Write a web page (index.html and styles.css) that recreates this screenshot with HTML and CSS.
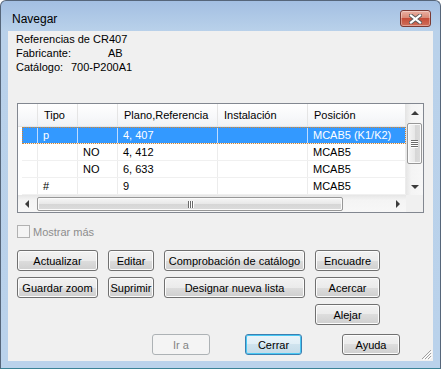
FILE: index.html
```html
<!DOCTYPE html>
<html lang="es">
<head>
    <meta charset="UTF-8">
    <title>Navegar</title>
    <link rel="stylesheet" href="styles.css">
</head>
<body>

    <div class="window">
        <!-- Title bar -->
        <div class="titlebar">
            <span class="title">Navegar</span>
            <div class="close">
                <svg width="13" height="10" viewBox="0 0 13 10">
                    <path d="M2 1.5 L11 8.5 M11 1.5 L2 8.5" stroke="#5b5b5b" stroke-width="4" stroke-linecap="square"/>
                    <path d="M2 1.5 L11 8.5 M11 1.5 L2 8.5" stroke="#ffffff" stroke-width="2.2" stroke-linecap="square"/>
                </svg>
            </div>
        </div>

        <div class="client">
            <div class="info">
                <div>Referencias de CR407</div>
                <div><span class="lbl-fab">Fabricante:</span>AB</div>
                <div><span class="lbl-cat">Catálogo:</span>700-P200A1</div>
            </div>

            <!-- List -->
            <div class="grid">
                <div class="grid-body">
                    <div class="cells">
                        <div class="head">
                            <div></div>
                            <div>Tipo</div>
                            <div></div>
                            <div>Plano,Referencia</div>
                            <div>Instalación</div>
                            <div>Posición</div>
                        </div>
                        <div class="row selected">
                            <div></div><div>p</div><div></div><div>4, 407</div><div></div><div>MCAB5 (K1/K2)</div>
                        </div>
                        <div class="row">
                            <div></div><div></div><div>NO</div><div>4, 412</div><div></div><div>MCAB5</div>
                        </div>
                        <div class="row">
                            <div></div><div></div><div>NO</div><div>6, 633</div><div></div><div>MCAB5</div>
                        </div>
                        <div class="row">
                            <div></div><div>#</div><div></div><div>9</div><div></div><div>MCAB5</div>
                        </div>
                    </div>
                    <div class="vscroll">
                        <div class="sbtn"><span class="arr-up"></span></div>
                        <div class="vthumb">
                            <span class="grip"></span><span class="grip"></span><span class="grip"></span><span class="grip"></span>
                        </div>
                        <div class="track"></div>
                        <div class="sbtn"><span class="arr-down"></span></div>
                    </div>
                </div>
                <div class="hscroll">
                    <div class="sbtn"><span class="arr-left"></span></div>
                    <div class="hthumb">
                        <span class="hgrip"></span><span class="hgrip"></span><span class="hgrip"></span>
                    </div>
                    <div class="track"></div>
                    <div class="sbtn"><span class="arr-right"></span></div>
                    <div class="corner"></div>
                </div>
            </div>

            <label class="check">
                <span class="box"></span>
                <span>Mostrar más</span>
            </label>

            <!-- Buttons -->
            <div class="buttons">
                <button>Actualizar</button>
                <button>Editar</button>
                <button>Comprobación de catálogo</button>
                <button>Encuadre</button>
                <button>Guardar zoom</button>
                <button>Suprimir</button>
                <button>Designar nueva lista</button>
                <button>Acercar</button>
                <button class="alejar">Alejar</button>
            </div>

            <div class="bottom">
                <button class="btn-ira" disabled>Ir a</button>
                <button class="btn-cerrar default">Cerrar</button>
                <button class="btn-ayuda">Ayuda</button>
            </div>

            <svg class="sizegrip" width="11" height="11" viewBox="0 0 11 11">
                <path d="M10 1 L1 10 M10 4 L4 10 M10 7 L7 10" stroke="#a0a0a0" stroke-width="1"/>
                <path d="M11 2 L2 11 M11 5 L5 11 M11 8 L8 11" stroke="#ffffff" stroke-width="1"/>
            </svg>
        </div>
    </div>

</body>
</html>
```

FILE: styles.css
```css
* {
    margin: 0;
    padding: 0;
    box-sizing: border-box;
}

body {
    width: 441px;
    height: 369px;
    font-family: "Liberation Sans", Arial, sans-serif;
    font-size: 11px;
    color: #000;
    background: #fff;
}

.window {
    width: 441px;
    height: 369px;
    border: 1px solid #56667a;
    border-bottom-color: #3b8396;
    border-radius: 6px 6px 0 0;
    background: linear-gradient(#a3bfe2, #b9d1ea 30px, #bad2eb);
    padding: 0 7px 7px 7px;
    display: flex;
    flex-direction: column;
}

/* Title bar */
.titlebar {
    height: 30px;
    display: flex;
    justify-content: space-between;
    align-items: flex-start;
    padding: 0 2px 0 4px;
}

.title {
    font-size: 12px;
    margin-top: 11px;
    line-height: 14px;
}

.close {
    margin-top: 9px;
    width: 31px;
    height: 17px;
    border: 1px solid #7b3a33;
    border-radius: 3px;
    background: linear-gradient(#eab0a2, #d98a77 45%, #c54d38 50%, #d0705b);
    display: flex;
    align-items: center;
    justify-content: center;
    box-shadow: inset 0 0 0 1px rgba(255, 255, 255, 0.35);
}

/* Client area */
.client {
    position: relative;
    width: 425px;
    height: 330px;
    background: #f0f0f0;
    padding: 1px 0 0 8px;
}

.info {
    line-height: 14px;
}

.lbl-fab {
    display: inline-block;
    width: 92px;
}

.lbl-cat {
    display: inline-block;
    width: 55px;
}

/* List */
.grid {
    margin: 29px 0 0 1px;
    width: 407px;
    height: 110px;
    border: 1px solid #828790;
    background: #fff;
}

.grid-body {
    display: flex;
    height: 91px;
}

.cells {
    flex: 1;
    overflow: hidden;
}

.head {
    display: grid;
    grid-template-columns: 20px 40px 40px 100px 90px 1fr;
    height: 23px;
    background: linear-gradient(#ffffff, #f7f8fa 60%, #f1f2f4);
    border-bottom: 1px solid #e5e5e5;
}

.head div {
    border-right: 1px solid #e5e5e5;
    padding-left: 6px;
    line-height: 22px;
    white-space: nowrap;
}

.head div:first-child {
    padding-left: 0;
}

.row {
    display: grid;
    grid-template-columns: 16px 40px 40px 100px 90px 1fr;
    height: 17px;
    margin-left: 4px;
    border-bottom: 1px solid #f0f0f0;
}

.row div {
    border-right: 1px solid #ececec;
    padding-left: 5px;
    line-height: 16px;
    white-space: nowrap;
}

.row.selected {
    background: #3399ff;
    color: #fff;
    outline: 1px dotted #d6842c;
    outline-offset: -1px;
}

.row.selected div {
    border-right-color: #bfdcff;
}

/* Scrollbars */
.vscroll {
    width: 17px;
    display: flex;
    flex-direction: column;
    background: linear-gradient(to right, #e6e6e6, #f4f4f4 30%, #f7f7f7);
}

.sbtn {
    width: 17px;
    height: 17px;
    display: flex;
    align-items: center;
    justify-content: center;
}

.track {
    flex: 1;
}

.arr-up, .arr-down, .arr-left, .arr-right {
    width: 0;
    height: 0;
    border: 4px solid transparent;
}

.arr-up {
    border-bottom: 4px solid #3c3c3c;
    border-top-width: 0;
}

.arr-down {
    border-top: 4px solid #3c3c3c;
    border-bottom-width: 0;
}

.arr-left {
    border-right: 4px solid #3c3c3c;
    border-left-width: 0;
}

.arr-right {
    border-left: 4px solid #3c3c3c;
    border-right-width: 0;
}

.vthumb {
    margin: 2px 1px 0 1px;
    height: 41px;
    border: 1px solid #979797;
    border-radius: 2px;
    background: linear-gradient(to right, #f6f6f6, #e8e8e8 50%, #d6d6d6 51%, #dcdcdc);
    box-shadow: inset 0 0 0 1px #fbfbfb;
    display: flex;
    flex-direction: column;
    align-items: center;
    justify-content: center;
    gap: 1px;
}

.grip {
    width: 7px;
    height: 1px;
    background: #6a6a6a;
    box-shadow: 0 1px 0 #fff;
}

.hscroll {
    height: 17px;
    display: flex;
    background: linear-gradient(#e6e6e6, #f4f4f4 30%, #f7f7f7);
}

.hthumb {
    margin: 2px 0 1px 2px;
    width: 306px;
    border: 1px solid #979797;
    border-radius: 2px;
    background: linear-gradient(#f6f6f6, #e8e8e8 50%, #d6d6d6 51%, #dcdcdc);
    box-shadow: inset 0 0 0 1px #fbfbfb;
    display: flex;
    align-items: center;
    justify-content: center;
    gap: 1px;
}

.hgrip {
    width: 1px;
    height: 7px;
    background: #6a6a6a;
    box-shadow: 1px 0 0 #fff;
}

.corner {
    width: 17px;
    background: #f0f0f0;
}

/* Checkbox */
.check {
    margin: 12px 0 0 1px;
    display: flex;
    align-items: center;
    gap: 3px;
    color: #8d8d8d;
    height: 13px;
}

.box {
    width: 13px;
    height: 13px;
    border: 1px solid #b1b1b1;
    background: #f4f4f4;
}

/* Buttons */
button {
    font-family: "Liberation Sans", Arial, sans-serif;
    font-size: 11px;
    color: #000;
    height: 21px;
    border: 1px solid #707070;
    border-radius: 3px;
    background: linear-gradient(#f2f2f2, #ebebeb 50%, #dddddd 50%, #cfcfcf);
    box-shadow: inset 0 0 0 1px #fcfcfc;
    white-space: nowrap;
}

.buttons {
    margin: 12px 0 0 1px;
    display: grid;
    grid-template-columns: 81px 46px 141px 65px;
    grid-auto-rows: 21px;
    column-gap: 10px;
    row-gap: 6px;
}

.alejar {
    grid-column: 4;
}

.bottom {
    margin: 9px 0 0 136px;
    display: flex;
}

.btn-ira {
    width: 58px;
    border-color: #adb2b5;
    background: #f4f4f4;
    color: #838383;
    box-shadow: none;
}

.btn-cerrar {
    margin-left: 35px;
    width: 57px;
}

.default {
    border-color: #3c7fb1;
    box-shadow: inset 0 0 0 1px #48c8f4;
    background: linear-gradient(#eaf4f9, #e0eef6 50%, #cfe3ee 50%, #c4dbe8);
}

.btn-ayuda {
    margin-left: 40px;
    width: 58px;
}

.sizegrip {
    position: absolute;
    right: 1px;
    bottom: 1px;
}
```
